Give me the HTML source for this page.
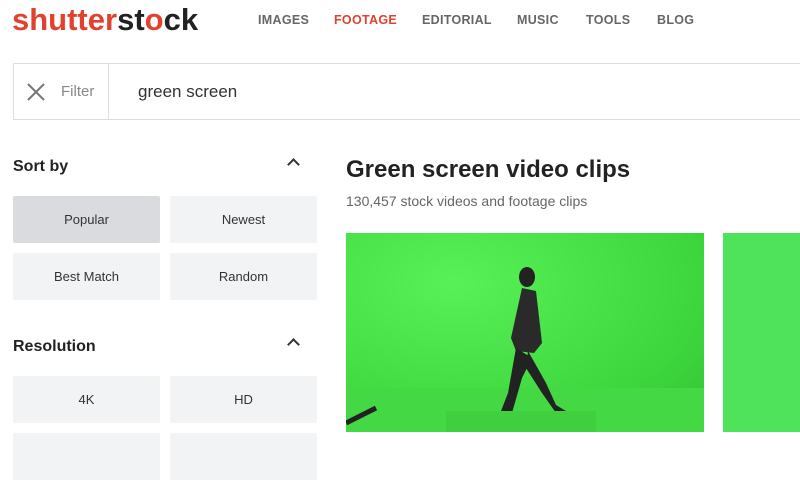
<!DOCTYPE html>
<html><head><meta charset="utf-8"><style>
*{margin:0;padding:0;box-sizing:border-box}
body{width:800px;height:442px;overflow:hidden;background:#fff;font-family:"Liberation Sans",sans-serif;position:relative}
.a{position:absolute}
.logo{left:12px;top:2px;font-size:31px;font-weight:bold;letter-spacing:0px;color:#e2412e}
.nav{top:13px;font-size:12.5px;font-weight:bold;color:#666;letter-spacing:.3px}
.bar{left:13px;top:63px;width:800px;height:57px;border:1px solid #ddd;background:#fff}
.btn{width:147px;height:47px;background:#f2f3f4;font-size:13px;color:#333;display:flex;align-items:center;justify-content:center;border-radius:2px}
.h{font-size:16px;font-weight:bold;color:#222}
.chev{width:9px;height:9px;border-left:2px solid #333;border-top:2px solid #333;transform:rotate(45deg)}
</style></head><body>
<div class="a logo">shutter<span style="color:#222">st<span style="color:#e2412e">o</span>ck</span></div>
<div class="a nav" style="left:258px">IMAGES</div>
<div class="a nav" style="left:334px;color:#e2412e">FOOTAGE</div>
<div class="a nav" style="left:422px">EDITORIAL</div>
<div class="a nav" style="left:517px">MUSIC</div>
<div class="a nav" style="left:586px">TOOLS</div>
<div class="a nav" style="left:657px">BLOG</div>
<div class="a bar"></div>
<div class="a" style="left:108px;top:64px;width:1px;height:55px;background:#ddd"></div>
<svg class="a" style="left:26px;top:82px" width="20" height="20"><path d="M2 2L18 18M18 2L2 18" stroke="#777" stroke-width="2"/></svg>
<div class="a" style="left:61px;top:83px;font-size:15px;color:#888">Filter</div>
<div class="a" style="left:138px;top:82px;font-size:17px;color:#333">green screen</div>
<div class="a h" style="left:13px;top:158px">Sort by</div>
<div class="a chev" style="left:289px;top:160px"></div>
<div class="a btn" style="left:13px;top:196px;background:#d9dbde">Popular</div>
<div class="a btn" style="left:170px;top:196px">Newest</div>
<div class="a btn" style="left:13px;top:253px">Best Match</div>
<div class="a btn" style="left:170px;top:253px">Random</div>
<div class="a h" style="left:13px;top:338px">Resolution</div>
<div class="a chev" style="left:289px;top:340px"></div>
<div class="a btn" style="left:13px;top:376px">4K</div>
<div class="a btn" style="left:170px;top:376px">HD</div>
<div class="a btn" style="left:13px;top:433px"></div>
<div class="a btn" style="left:170px;top:433px"></div>
<div class="a" style="left:346px;top:156px;font-size:24px;font-weight:bold;color:#222">Green screen video clips</div>
<div class="a" style="left:346px;top:193px;font-size:14px;color:#666">130,457 stock videos and footage clips</div>
<div class="a" style="left:346px;top:233px;width:358px;height:199px;background:radial-gradient(ellipse at 30% 25%,#58f158,#3dd63d 70%,#34c334);overflow:hidden">
<div class="a" style="left:0;top:155px;width:358px;height:44px;background:#45d845"></div>
<svg class="a" style="left:0;top:0" width="358" height="199">
<ellipse cx="181" cy="44" rx="8" ry="10" fill="#222"/>
<path d="M176 55 L190 58 L196 110 L188 120 L170 118 L165 105 Z" fill="#2a2a2a"/>
<path d="M170 115 L162 160 L155 178 L166 180 L176 145 L186 125 Z" fill="#222"/>
<path d="M182 118 L200 150 L210 172 L220 178 L210 180 L196 160 L180 135 Z" fill="#222"/>
<rect x="100" y="178" width="150" height="21" fill="#3fcf3f"/>
<path d="M0 190 L30 175" stroke="#222" stroke-width="5"/>
</svg>
</div>
<div class="a" style="left:723px;top:233px;width:77px;height:199px;background:#4fe25b"></div>
</body></html>
